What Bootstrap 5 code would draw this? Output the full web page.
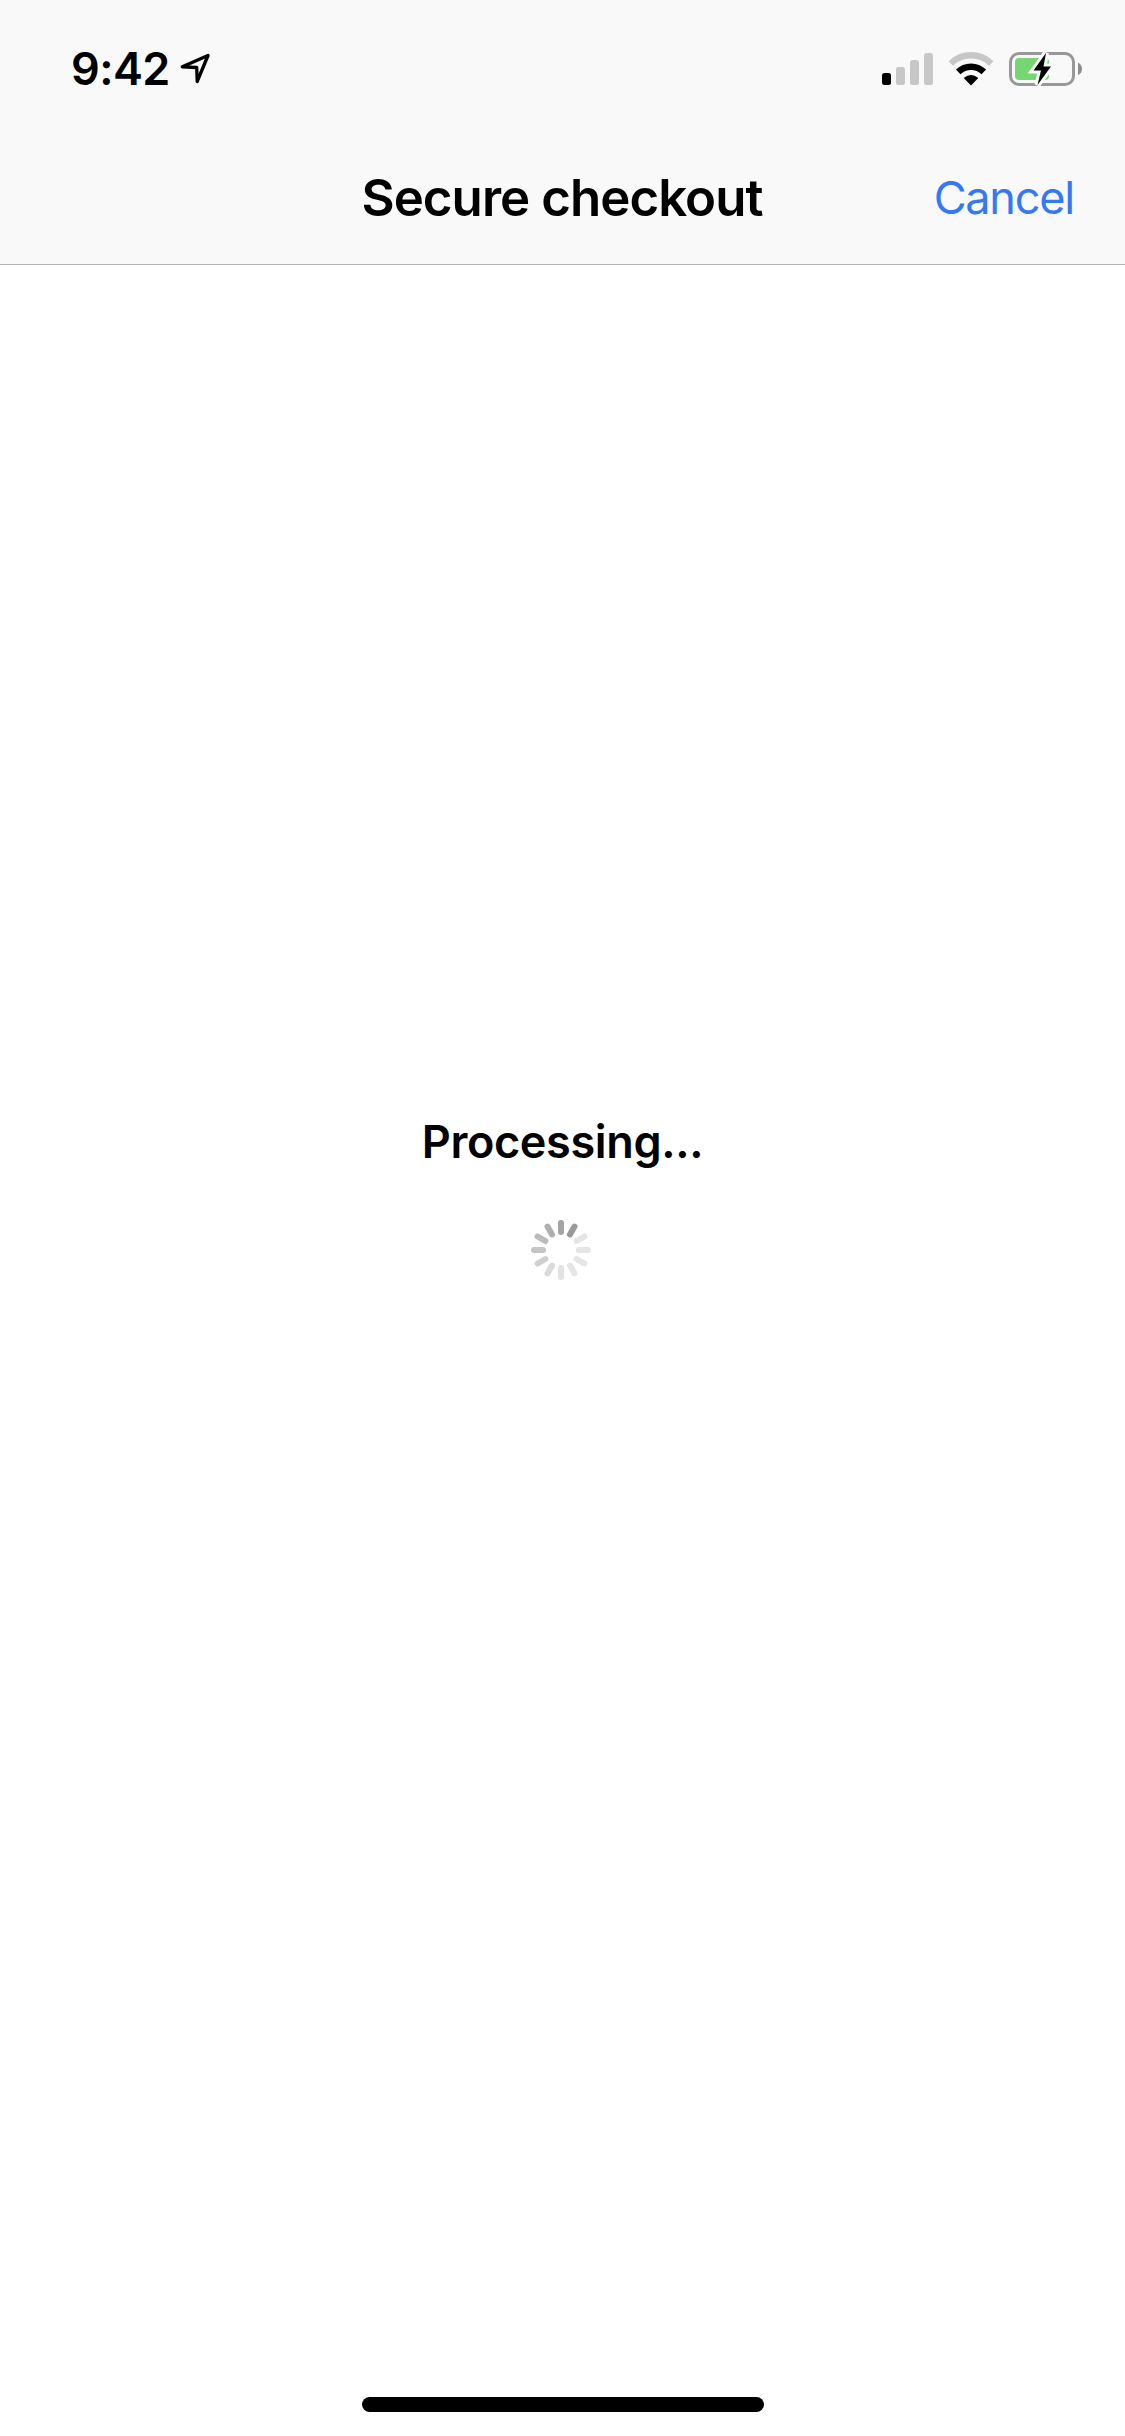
<!DOCTYPE html>
<html lang="en">
<head>
<meta charset="utf-8">
<meta name="viewport" content="width=device-width, initial-scale=1">
<title>Secure checkout</title>
<link href="https://cdn.jsdelivr.net/npm/bootstrap@5.3.0/dist/css/bootstrap.min.css" rel="stylesheet">
<style>
body{font-family:Inter,"Liberation Sans",sans-serif;background:#fff;color:#000}
svg{display:block}
.screen{height:2436px;width:1125px;overflow:hidden}
.top-area{height:265px;background:#f9f9f9;border-bottom:1px solid #b2b2b2}
.status-bar{height:132px;padding:5px 42px 0 71px}
.clock{font-size:45px;font-weight:600;line-height:1;letter-spacing:-.6px}
.location-icon{margin-left:6px}
.title-bar{display:grid;grid-template-columns:1fr auto 1fr;height:132px;padding:0 51px 0 50px;line-height:1}
.page-title{font-size:51px;font-weight:600;letter-spacing:-.95px}
.cancel-btn{font-size:45px;letter-spacing:-1.2px;line-height:1;color:#3478f6;margin-bottom:1px}
.processing-text{font-size:45px;font-weight:600;line-height:1;letter-spacing:-.35px;margin-top:854px}
.spinner-svg{margin:55px 3px 0 0}
.home-bar{width:402px;height:15px;margin-bottom:24px;background:#000}
</style>
</head>
<body>
<div class="screen d-flex flex-column">
  <header class="top-area flex-shrink-0">
    <div class="status-bar d-flex align-items-center justify-content-between">
      <div class="d-flex align-items-center">
        <span class="clock">9:42</span>
        <svg class="location-icon" width="40" height="40" viewBox="176 49 40 40"><path d="M182.300 66.800L208 55.500L197.200 81.500L196.700 67.500Z" fill="none" stroke="#000" stroke-width="3.300" stroke-linejoin="round"/></svg>
      </div>
      <svg width="203" height="40" viewBox="880 49 203 40">
        <rect x="882" y="73" width="9" height="12" rx="2.500"/>
        <g fill="#c7c7c7"><rect x="896" y="67" width="9" height="18" rx="2.500"/><rect x="910" y="60" width="9" height="25" rx="2.500"/><rect x="924" y="53" width="9" height="32" rx="2.500"/></g>
        <path d="M950.800 63.500A29 29 0 0 1 991.200 63.500" fill="none" stroke="#c7c7c7" stroke-width="6.500"/>
        <path d="M958.200 71.800A18.500 18.500 0 0 1 983.800 71.800" fill="none" stroke="#000" stroke-width="6.500"/>
        <path d="M971 85.500L963.700 78Q971 72 978.300 78Z"/>
        <rect x="1010.500" y="53.500" width="63" height="31" rx="8.500" fill="none" stroke="#989898" stroke-width="3"/>
        <rect x="1015" y="58" width="34" height="22" rx="4" fill="#76d672"/>
        <path d="M1078 62.500Q1082 64.500 1082 69T1078 75Z" fill="#8e8e8e"/>
        <path d="M1046 53L1033.500 70.500H1041L1037.500 85L1051 66.500H1043.500Z" stroke="#f9f9f9" stroke-width="6"/>
        <path d="M1046 53L1033.500 70.500H1041L1037.500 85L1051 66.500H1043.500Z"/>
      </svg>
    </div>
    <nav class="title-bar align-items-center">
      <span></span>
      <h1 class="page-title m-0">Secure checkout</h1>
      <button class="cancel-btn btn btn-link text-decoration-none border-0 p-0 ms-auto" type="button">Cancel</button>
    </nav>
  </header>
  <main class="flex-grow-1 d-flex flex-column align-items-center">
    <div class="processing-text">Processing...</div>
    <svg class="spinner-svg" width="62" height="62" viewBox="-31 -31 62 62" role="status" stroke-width="6" stroke-linecap="round">
      <path d="M0-18V-27" stroke="#a4a4a4"/>
      <path d="M0-18V-27" stroke="#999" transform="rotate(30)"/>
      <path d="M0-18V-27" stroke="#e5e5e5" transform="rotate(60)"/>
      <path d="M0-18V-27" stroke="#e5e5e5" transform="rotate(90)"/>
      <path d="M0-18V-27" stroke="#e5e5e5" transform="rotate(120)"/>
      <path d="M0-18V-27" stroke="#e5e5e5" transform="rotate(150)"/>
      <path d="M0-18V-27" stroke="#e2e2e2" transform="rotate(180)"/>
      <path d="M0-18V-27" stroke="#dadada" transform="rotate(210)"/>
      <path d="M0-18V-27" stroke="#d0d0d0" transform="rotate(240)"/>
      <path d="M0-18V-27" stroke="#c5c5c5" transform="rotate(270)"/>
      <path d="M0-18V-27" stroke="#bababa" transform="rotate(300)"/>
      <path d="M0-18V-27" stroke="#afafaf" transform="rotate(330)"/>
    </svg>
  </main>
  <div class="home-bar rounded-pill mx-auto flex-shrink-0"></div>
</div>
<script src="https://cdn.jsdelivr.net/npm/bootstrap@5.3.0/dist/js/bootstrap.bundle.min.js"></script>
</body>
</html>
